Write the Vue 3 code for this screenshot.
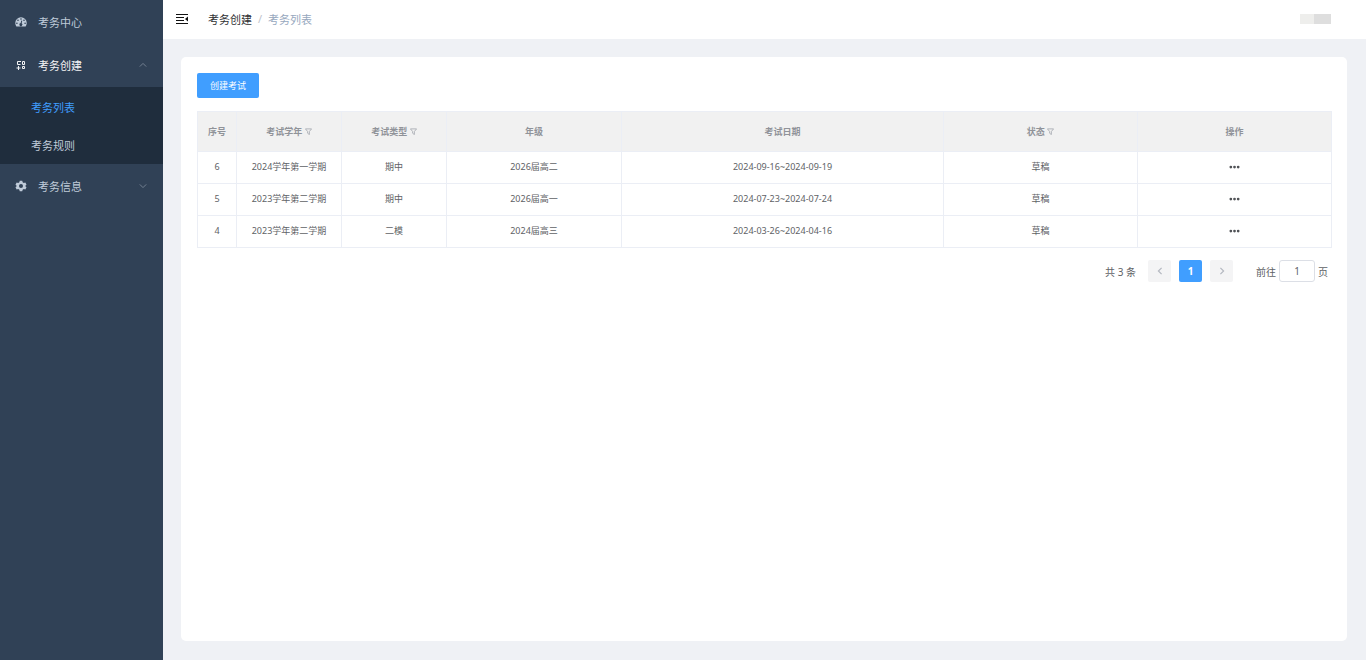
<script setup>
import { ref } from 'vue'

const page = ref(1)
const columns = [
  { label: '序号', cls: 'w-index' },
  { label: '考试学年', cls: 'w-mid', filter: true },
  { label: '考试类型', cls: 'w-mid', filter: true },
  { label: '年级', cls: 'w-grade' },
  { label: '考试日期', cls: 'w-date' },
  { label: '状态', cls: 'w-state', filter: true },
  { label: '操作', cls: 'w-state' }
]
const rows = [
  { id: 6, year: '2024学年第一学期', type: '期中', grade: '2026届高二', date: '2024-09-16~2024-09-19', state: '草稿' },
  { id: 5, year: '2023学年第二学期', type: '期中', grade: '2026届高一', date: '2024-07-23~2024-07-24', state: '草稿' },
  { id: 4, year: '2023学年第二学期', type: '二模', grade: '2024届高三', date: '2024-03-26~2024-04-16', state: '草稿' }
]
</script>

<template>
  <div class="layout">
    <nav class="sidebar" aria-label="主菜单">
      <a href="#" class="item">
        <svg class="icon" viewBox="0 0 24 24" aria-hidden="true">
          <path fill="currentColor" fill-rule="evenodd" d="M12 2.500A11.500 11.500 0 0 0 .5 14c0 2.600.8 4.900 2.200 7h18.600c1.400-2.100 2.200-4.400 2.200-7A11.500 11.500 0 0 0 12 2.500zM12 4.500a1.600 1.600 0 1 1 0 3.200 1.600 1.600 0 0 1 0-3.200zM6 7a1.600 1.600 0 1 1 0 3.200A1.600 1.600 0 0 1 6 7zM3.800 13a1.600 1.600 0 1 1 0 3.200 1.600 1.600 0 0 1 0-3.200zM20.200 13a1.600 1.600 0 1 1 0 3.200 1.600 1.600 0 0 1 0-3.200zM18 7a1.600 1.600 0 1 1 0 3.200A1.600 1.600 0 0 1 18 7zM12.800 9l1.700.5-1.200 5a3 3 0 1 1-2-.4z" />
        </svg>
        <span>考务中心</span>
      </a>
      <button type="button" class="item open" aria-expanded="true">
        <svg class="icon" viewBox="0 0 12 12" fill="none" stroke="currentColor" aria-hidden="true">
          <path d="M5.500 2.500h-3v3h3M7.500 2.500h2v3h-2zM7.500 7.500h2v2h-2zM3.500 7v4M1.500 9h4M5.500 2v1" />
        </svg>
        <span>考务创建</span>
        <svg class="arrow" viewBox="0 0 10 10" aria-hidden="true"><path d="M1 7l4-4 4 4" /></svg>
      </button>
      <div class="sub">
        <a href="#" class="subitem active" aria-current="page">考务列表</a>
        <a href="#" class="subitem">考务规则</a>
      </div>
      <button type="button" class="item" aria-expanded="false">
        <svg class="icon" viewBox="0 0 24 24" aria-hidden="true">
          <path fill="currentColor" fill-rule="evenodd" d="M9.500 1.500h5l.8 3.200 2.200 1.300 3.200-.9 2.300 4.200-2.200 2.200v1l2.200 2.200-2.300 4.200-3.200-.9-2.200 1.300-.8 3.200h-5l-.8-3.200L6.500 18l-3.200.9L1 14.700l2.200-2.200v-1L1 9.300l2.300-4.200 3.200.9 2.200-1.300zM12 8a4 4 0 1 0 0 8 4 4 0 0 0 0-8z" />
        </svg>
        <span>考务信息</span>
        <svg class="arrow" viewBox="0 0 10 10" aria-hidden="true"><path d="M1 3l4 4 4-4" /></svg>
      </button>
    </nav>

    <div class="body">
      <header class="topbar">
        <button type="button" class="fold" aria-label="收起菜单">
          <svg viewBox="0 0 14 12" aria-hidden="true">
            <path d="M1 1.500h12M1 4.500h8M1 7.500h8M1 10.500h12" stroke="currentColor" />
            <path d="M13 3.500v5L10 6z" fill="currentColor" />
          </svg>
        </button>
        <nav class="crumbs" aria-label="面包屑">
          <a href="#">考务创建</a>
          <span class="slash">/</span>
          <span class="current">考务列表</span>
        </nav>
        <div class="user"><i class="fade"></i><i class="block"></i></div>
      </header>

      <main class="card">
        <button type="button" class="create">创建考试</button>
        <table>
          <thead>
            <tr>
              <th v-for="c in columns" :key="c.label" :class="c.cls">
                {{ c.label }}
                <svg v-if="c.filter" class="funnel" viewBox="0 0 8 8" aria-hidden="true">
                  <path d="M.5 1h7L5 4v3.500L3 6V4z" />
                </svg>
              </th>
            </tr>
          </thead>
          <tbody>
            <tr v-for="r in rows" :key="r.id">
              <td>{{ r.id }}</td>
              <td>{{ r.year }}</td>
              <td>{{ r.type }}</td>
              <td>{{ r.grade }}</td>
              <td>{{ r.date }}</td>
              <td>{{ r.state }}</td>
              <td>
                <button type="button" class="more" aria-label="更多操作">
                  <svg viewBox="0 0 12 4" aria-hidden="true">
                    <circle cx="2" cy="2" r="1.500" /><circle cx="6" cy="2" r="1.500" /><circle cx="10" cy="2" r="1.500" />
                  </svg>
                </button>
              </td>
            </tr>
          </tbody>
        </table>
        <div class="pager">
          <span class="total">共 3 条</span>
          <button type="button" class="pg" disabled aria-label="上一页">
            <svg viewBox="0 0 10 10" aria-hidden="true"><path d="M7 1L3 5l4 4" /></svg>
          </button>
          <button type="button" class="pg on">1</button>
          <button type="button" class="pg" disabled aria-label="下一页">
            <svg viewBox="0 0 10 10" aria-hidden="true"><path d="M3 1l4 4-4 4" /></svg>
          </button>
          <label class="jump">前往<input v-model="page" type="text" />页</label>
        </div>
      </main>
    </div>
  </div>
</template>

<style>
body {
  margin: 0;
}
</style>

<style scoped>
.layout {
  display: flex;
  min-height: 100vh;
  background: #eff1f5;
  color: #606266;
  font-family: "Noto Sans", "Noto Sans CJK SC", sans-serif;
  font-size: 9px;
}
button,
input {
  font: inherit;
  color: inherit;
  box-sizing: border-box;
}
button {
  padding: 0;
  border: 0;
  background: none;
  cursor: pointer;
}
a {
  color: inherit;
  text-decoration: none;
}
svg {
  display: block;
}
.sidebar {
  flex: 0 0 163px;
  background: #304156;
  color: #bfcbd9;
  font-size: 11px;
}
.item {
  display: flex;
  align-items: center;
  width: 100%;
  height: 43px;
  padding: 0 16px 0 15px;
  box-sizing: border-box;
}
.item.open {
  height: 44px;
  color: #f4f4f5;
}
.icon {
  width: 12px;
  height: 12px;
  margin-right: 11px;
}
.arrow {
  width: 8px;
  height: 8px;
  margin-left: auto;
  fill: none;
  stroke: #8490a0;
}
.sub {
  background: #1f2d3d;
}
.subitem {
  display: flex;
  align-items: center;
  height: 38px;
  padding-left: 31px;
}
.subitem.active {
  height: 39px;
  color: #409eff;
}
.body {
  flex: 1;
  min-width: 0;
  display: flex;
  flex-direction: column;
}
.topbar {
  display: flex;
  align-items: center;
  height: 39px;
  padding: 0 35px 2px 12px;
  background: #fff;
  box-sizing: border-box;
}
.fold {
  color: #111;
}
.fold svg {
  width: 14px;
  height: 12px;
}
.crumbs {
  display: flex;
  gap: 6px;
  margin-left: 19px;
  font-size: 11px;
}
.crumbs a {
  color: #303133;
}
.slash {
  color: #c0c4cc;
}
.current {
  color: #97a8be;
}
.user {
  display: flex;
  margin-left: auto;
}
.fade {
  width: 14px;
  height: 10px;
  background: #eeeeec;
}
.block {
  width: 17px;
  height: 10px;
  background: #dedede;
}
.card {
  flex: 1;
  margin: 18px 19px 19px 18px;
  padding: 16px 15px 16px 16px;
  border-radius: 5px;
  background: #fff;
}
.create {
  display: block;
  width: 62px;
  height: 25px;
  margin-bottom: 13px;
  border-radius: 2px;
  background: #409eff;
  color: #fff;
}
table {
  width: 100%;
  table-layout: fixed;
  border-collapse: collapse;
}
th,
td {
  height: 29px;
  padding: 0 0 2px;
  border: 1px solid #ebeef5;
  text-align: center;
}
th {
  height: 39px;
  padding: 0;
  background: #f1f1f1;
  color: #909399;
  font-weight: 700;
}
.w-index {
  width: 38px;
}
.w-mid {
  width: 104px;
}
.w-grade {
  width: 174px;
}
.w-state {
  width: 193px;
}
.funnel {
  display: inline-block;
  width: 7px;
  height: 7px;
  fill: none;
  stroke: #a8abb2;
}
.more {
  display: block;
  margin: 0 auto;
}
.more svg {
  width: 11px;
  height: 4px;
  fill: #505256;
}
.pager {
  display: flex;
  align-items: center;
  justify-content: flex-end;
  gap: 8px;
  margin-top: 12px;
  padding-right: 4px;
  font-size: 10px;
}
.total {
  margin-right: 4px;
}
.pg {
  display: flex;
  align-items: center;
  justify-content: center;
  width: 23px;
  height: 22px;
  border-radius: 2px;
  background: #f4f4f5;
}
.pg svg {
  width: 8px;
  height: 8px;
  fill: none;
  stroke: #b4b8c0;
  stroke-width: 1.500;
}
.pg.on {
  background: #409eff;
  color: #fff;
  font-weight: 700;
}
.jump {
  display: flex;
  align-items: center;
  gap: 3px;
  margin-left: 15px;
}
.jump input {
  width: 36px;
  height: 22px;
  padding: 0;
  border: 1px solid #dcdfe6;
  border-radius: 3px;
  background: #fff;
  text-align: center;
}
</style>
